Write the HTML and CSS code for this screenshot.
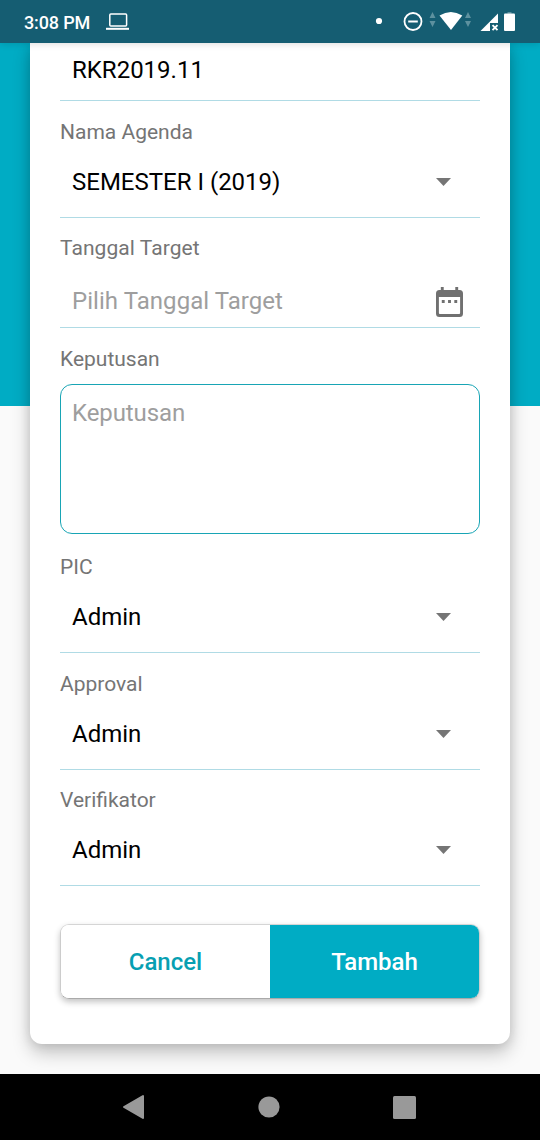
FILE: index.html
```html
<!DOCTYPE html>
<html lang="id">
<head>
<meta charset="utf-8">
<title>Tambah Keputusan</title>
<link rel="stylesheet" href="styles.css">
</head>
<body>
<header class="status">
  <span class="clock">3:08 PM</span>
  <svg class="laptop" width="24" height="18" viewBox="0 0 24 18"><rect x="3.800" y="1" width="16.800" height="12" rx="1" fill="none" stroke="#fff" stroke-width="1.500"/><rect x="0" y="14.800" width="23" height="2" fill="#fff"/></svg>
  <svg class="tray" width="150" height="43" viewBox="0 0 150 43">
    <circle cx="9" cy="21" r="3.100" fill="#fff"/>
    <circle cx="43" cy="21.500" r="8.500" fill="none" stroke="#fff" stroke-width="1.800"/>
    <path d="M38.200 21.500h9.600" stroke="#fff" stroke-width="2"/>
    <path d="M59.500 18l3-6 3 6zM59.500 21h6l-3 6zM95 18l3-6 3 6zM95 21h6l-3 6z" fill="#5d919f"/>
    <path d="M69.500 15.500Q80.800 8.500 92.300 15.500L81 30z" fill="#fff"/>
    <path d="M128 13.500V23h-8v8h-9.500z" fill="#fff"/>
    <path d="M122.500 25.200l5 5m0-5l-5 5" stroke="#fff" stroke-width="1.900"/>
    <path d="M137.500 12h4v1.800h-4z" fill="#5d919f"/>
    <rect x="134" y="13.500" width="11" height="17.500" rx="1" fill="#fff"/>
  </svg>
</header>
<main class="screen">
  <form class="card">
    <div class="field first"><div class="value code">RKR2019.11</div></div>
    <div class="field agenda">
      <div class="label">Nama Agenda</div>
      <div class="value"><span class="semester">SEMESTER I (2019)</span><i class="caret"></i></div>
    </div>
    <div class="field date">
      <div class="label target">Tanggal Target</div>
      <div class="value hint"><span>Pilih Tanggal Target</span>
        <svg class="calendar" width="27" height="30" viewBox="0 0 28 30" preserveAspectRatio="none"><path d="M5 0h3v3h12V0h3v3h1.500A3.500 3.500 0 0 1 28 6.500v20a3.500 3.500 0 0 1-3.500 3.500h-21A3.500 3.500 0 0 1 0 26.500v-20A3.500 3.500 0 0 1 3.500 3H5zM3 10v16q0 1 1 1h20q1 0 1-1V10z" fill="#707070" fill-rule="evenodd"/><path d="M6 13h3v3H6zM12.500 13h3v3h-3zM19 13h3v3h-3z" fill="#707070"/></svg>
      </div>
    </div>
    <div class="note">
      <div class="label">Keputusan</div>
      <div class="area hint">Keputusan</div>
    </div>
    <div class="field pic">
      <div class="label">PIC</div>
      <div class="value"><span>Admin</span><i class="caret"></i></div>
    </div>
    <div class="field approval">
      <div class="label">Approval</div>
      <div class="value"><span>Admin</span><i class="caret"></i></div>
    </div>
    <div class="field verify">
      <div class="label">Verifikator</div>
      <div class="value"><span>Admin</span><i class="caret"></i></div>
    </div>
    <div class="actions"><div class="btn cancel">Cancel</div><div class="btn submit">Tambah</div></div>
  </form>
</main>
<nav class="nav">
  <svg width="23" height="26" viewBox="0 0 23 26"><path d="M21 2v22L2 13z" fill="#999" stroke="#999" stroke-width="2" stroke-linejoin="round"/></svg>
  <svg width="22" height="22" viewBox="0 0 22 22"><circle cx="11" cy="11" r="10.600" fill="#999"/></svg>
  <svg width="23" height="23" viewBox="0 0 23 23"><rect width="23" height="23" rx="1.500" fill="#999"/></svg>
</nav>
</body>
</html>
```
FILE: styles.css
```css
* { box-sizing: border-box; }
body { margin: 0; width: 540px; height: 1140px; overflow: hidden; display: flex; flex-direction: column; font-family: Roboto, "Liberation Sans", sans-serif; }
svg { display: block; flex: none; }
.status { height: 43px; flex: none; background: #155d72; display: flex; align-items: center; padding-left: 24px; position: relative; z-index: 1; box-shadow: 0 1px 7px rgba(0,0,0,.14); }
.clock { width: 82px; font-size: 18px; font-weight: 500; letter-spacing: -.15px; color: #fff; line-height: 22px; padding-top: 2px; white-space: nowrap; }
.tray { margin-left: auto; margin-right: 20px; }
.screen { height: 1031px; flex: none; padding: 0 30px 30px; background: linear-gradient(#00acc4 363px, #fafafa 363px); overflow: hidden; }
.card { height: 1001px; margin: 0; padding: 0 30px; background: #fff; border-radius: 0 0 12px 12px; box-shadow: 0 9px 18px rgba(0,0,0,.22), 0 0 12px rgba(0,0,0,.12); }
.field { border-bottom: 1px solid #b0dbe5; }
.first { height: 58px; padding-top: 13px; }
.agenda { height: 117px; padding-top: 19px; }
.date { height: 110px; padding-top: 18px; }
.note { height: 206px; padding-top: 19px; }
.pic { height: 119px; padding-top: 21px; }
.approval { height: 117px; padding-top: 19px; }
.verify { height: 116px; padding-top: 18px; }
.label { font-size: 21px; line-height: 24px; height: 24px; color: #757575; white-space: nowrap; }
.target { letter-spacing: .06px; }
.value { font-size: 24px; line-height: 28px; height: 28px; color: #000; padding: 0 29px 0 12px; display: flex; align-items: center; justify-content: space-between; white-space: nowrap; }
.label + .value { margin-top: 24px; }
.date .value { margin-top: 27px; padding-right: 17px; color: #9e9e9e; letter-spacing: .05px; }
.calendar { margin-top: 2px; }
.hint { color: #9e9e9e; }
.caret { width: 15px; height: 8px; background: #757575; clip-path: polygon(0 0, 100% 0, 50% 100%); }
.area { margin-top: 13px; height: 150px; border: 1px solid #18a5b5; border-radius: 12px; padding: 14px 11px; font-size: 24px; line-height: 28px; letter-spacing: -.1px; }
.actions { margin-top: 38px; height: 75px; display: flex; border-radius: 9px; border: 1px solid #ccc; border-color: #d5d5d5 #ccc #aaa; overflow: hidden; box-shadow: 0 3px 6px rgba(0,0,0,.24); }
.btn { flex: 1; display: flex; align-items: center; justify-content: center; font-size: 24px; font-weight: 500; padding-top: 1px; }
.cancel { color: #079fb2; background: #fff; }
.submit { color: #fff; background: #00acc4; }
.nav { height: 66px; background: #000; display: flex; align-items: center; justify-content: space-between; padding: 0 124px 0 122px; }
```
